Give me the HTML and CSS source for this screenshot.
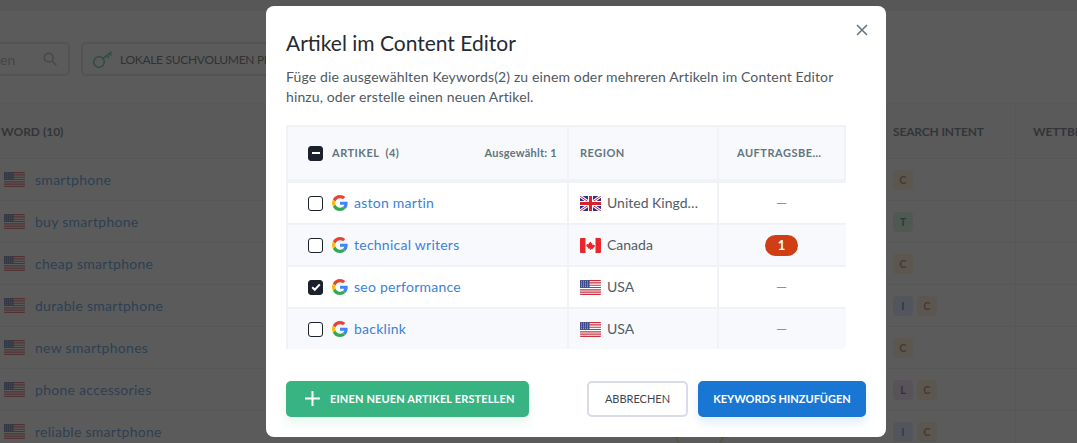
FILE: index.html
```html
<!DOCTYPE html>
<html lang="de">
<head>
  <meta charset="UTF-8" />
  <meta name="viewport" content="width=device-width, initial-scale=1.0" />
  <title>Artikel im Content Editor</title>
  <link rel="stylesheet" href="styles.css">
</head>
<body>
  <svg class="icon-defs" aria-hidden="true">
    <symbol id="flag-us" viewBox="0 0 21 15">
      <rect width="21" height="15" fill="#fff"/>
      <path d="M0 .6h21M0 2.9h21M0 5.2h21M0 7.5h21M0 9.8h21M0 12.1h21M0 14.4h21" stroke="#c8313e" stroke-width="1.15"/>
      <rect width="9.5" height="7.5" fill="#3f4a8a"/>
      <path d="M1 1.2h8M1 3h8M1 4.8h8M1 6.4h8" stroke="#c9cde6" stroke-width=".7" stroke-dasharray="1 1"/>
    </symbol>
    <symbol id="flag-gb" viewBox="0 0 21 15">
      <rect width="21" height="15" fill="#2b2f8f"/>
      <path d="M0 0l21 15M21 0L0 15" stroke="#fff" stroke-width="3"/>
      <path d="M0 0l21 15M21 0L0 15" stroke="#d8232f" stroke-width="1"/>
      <path d="M10.5 0v15M0 7.5h21" stroke="#fff" stroke-width="5"/>
      <path d="M10.5 0v15M0 7.5h21" stroke="#d8232f" stroke-width="3"/>
    </symbol>
    <symbol id="flag-ca" viewBox="0 0 21 15">
      <rect width="21" height="15" fill="#fff"/>
      <rect width="5.5" height="15" fill="#e8262c"/>
      <rect x="15.5" width="5.5" height="15" fill="#e8262c"/>
      <path d="M10.5 3.6l.9 1.7 1-.4-.4 2.2 1.3-.9.4.9 1.2-.2-.4 1.4.5.3-2.3 1.8.2.9-2-.3V12h-.8v-1.5l-2 .3.2-.9-2.3-1.8.5-.3-.4-1.4 1.2.2.4-.9 1.3.9-.4-2.2 1 .4z" fill="#e8262c"/>
    </symbol>
    <symbol id="logo-google" viewBox="0 0 48 48">
      <path fill="#ea4335" d="M24 9.5c3.5 0 6.700 1.300 9.100 3.500l6.800-6.800C35.800 2.400 30.300 0 24 0 14.600 0 6.500 5.400 2.600 13.200l7.900 6.200C12.400 13.700 17.700 9.500 24 9.500z"/>
      <path fill="#4285f4" d="M47 24.500c0-1.600-.2-3.100-.4-4.500H24v9h12.900c-.6 3-2.200 5.400-4.700 7.100l7.600 5.900C44.300 37.800 47 31.700 47 24.500z"/>
      <path fill="#fbbc05" d="M10.500 28.600c-.5-1.400-.8-3-.8-4.600s.3-3.200.8-4.600l-7.900-6.200C.9 16.500 0 20.100 0 24s.9 7.500 2.600 10.800l7.900-6.200z"/>
      <path fill="#34a853" d="M24 48c6.500 0 11.900-2.100 15.800-5.800l-7.600-5.900c-2.100 1.400-4.900 2.300-8.200 2.300-6.300 0-11.600-4.200-13.500-9.900l-7.900 6.200C6.500 42.600 14.600 48 24 48z"/>
    </symbol>
  </svg>

  <div class="page">
    <div class="top-strip"></div>
    <div class="toolbar">
      <div class="search-box">
        <span>en</span>
        <svg class="search-icon" viewBox="0 0 16 16"><circle cx="6.500" cy="6.500" r="5"/><path d="M10.200 10.200l5 5"/></svg>
      </div>
      <div class="key-btn">
        <svg class="key-icon" viewBox="0 0 20 18"><circle cx="6" cy="12" r="5.300"/><path d="M10 8.500l8.500-6.500M14 5.500l2 2.500M16.700 3.400l1.600 2"/></svg>
        LOKALE SUCHVOLUMEN PRÜFEN
      </div>
    </div>

    <div class="bg-table">
      <div class="bg-row bg-head">
        <div class="bg-word">WORD (10)</div>
        <div class="bg-intent">SEARCH INTENT</div>
        <div class="bg-rest">WETTBEWERB</div>
      </div>
      <div class="bg-row">
        <div class="bg-word"><svg class="flag"><use href="#flag-us"/></svg><span>smartphone</span></div>
        <div class="bg-intent"><i class="tag tag-c">C</i></div>
        <div class="bg-rest"></div>
      </div>
      <div class="bg-row">
        <div class="bg-word"><svg class="flag"><use href="#flag-us"/></svg><span>buy smartphone</span></div>
        <div class="bg-intent"><i class="tag tag-t">T</i></div>
        <div class="bg-rest"></div>
      </div>
      <div class="bg-row">
        <div class="bg-word"><svg class="flag"><use href="#flag-us"/></svg><span>cheap smartphone</span></div>
        <div class="bg-intent"><i class="tag tag-c">C</i></div>
        <div class="bg-rest"></div>
      </div>
      <div class="bg-row">
        <div class="bg-word"><svg class="flag"><use href="#flag-us"/></svg><span>durable smartphone</span></div>
        <div class="bg-intent"><i class="tag tag-i">I</i><i class="tag tag-c">C</i></div>
        <div class="bg-rest"></div>
      </div>
      <div class="bg-row">
        <div class="bg-word"><svg class="flag"><use href="#flag-us"/></svg><span>new smartphones</span></div>
        <div class="bg-intent"><i class="tag tag-c">C</i></div>
        <div class="bg-rest"></div>
      </div>
      <div class="bg-row">
        <div class="bg-word"><svg class="flag"><use href="#flag-us"/></svg><span>phone accessories</span></div>
        <div class="bg-intent"><i class="tag tag-l">L</i><i class="tag tag-c">C</i></div>
        <div class="bg-rest"></div>
      </div>
      <div class="bg-row">
        <div class="bg-word"><svg class="flag"><use href="#flag-us"/></svg><span>reliable smartphone</span></div>
        <div class="bg-intent"><i class="tag tag-i">I</i><i class="tag tag-c">C</i></div>
        <div class="bg-rest"></div>
      </div>
    </div>
    <div class="score-ring"></div>
  </div>

  <div class="overlay">
    <div class="modal">
      <button class="close-btn" aria-label="Schließen">
        <svg viewBox="0 0 12 12"><path d="M1 1l10 10M11 1L1 11"/></svg>
      </button>
      <h1>Artikel im Content Editor</h1>
      <p class="modal-text">Füge die ausgewählten Keywords(2) zu einem oder mehreren Artikeln im Content Editor hinzu, oder erstelle einen neuen Artikel.</p>

      <div class="articles">
        <div class="art-row art-head">
          <div class="art-cell cell-name">
            <span class="check check-on check-minus"></span>
            <span class="head-label">ARTIKEL&nbsp; (4)</span>
            <span class="selected-count">Ausgewählt: 1</span>
          </div>
          <div class="art-cell cell-region"><span class="head-label">REGION</span></div>
          <div class="art-cell cell-orders"><span class="head-label head-clip">AUFTRAGSBEARBEITUNG</span></div>
        </div>

        <div class="art-row">
          <div class="art-cell cell-name">
            <span class="check"></span>
            <svg class="g-logo"><use href="#logo-google"/></svg>
            <a class="art-link">aston martin</a>
          </div>
          <div class="art-cell cell-region"><svg class="flag"><use href="#flag-gb"/></svg><span class="region-name">United Kingdom</span></div>
          <div class="art-cell cell-orders"><span class="dash">—</span></div>
        </div>

        <div class="art-row">
          <div class="art-cell cell-name">
            <span class="check"></span>
            <svg class="g-logo"><use href="#logo-google"/></svg>
            <a class="art-link">technical writers</a>
          </div>
          <div class="art-cell cell-region"><svg class="flag"><use href="#flag-ca"/></svg><span class="region-name">Canada</span></div>
          <div class="art-cell cell-orders"><span class="count-pill">1</span></div>
        </div>

        <div class="art-row">
          <div class="art-cell cell-name">
            <span class="check check-on">
              <svg viewBox="0 0 14 14"><path d="M3.200 7.300l2.600 2.500 5-5.400"/></svg>
            </span>
            <svg class="g-logo"><use href="#logo-google"/></svg>
            <a class="art-link">seo performance</a>
          </div>
          <div class="art-cell cell-region"><svg class="flag"><use href="#flag-us"/></svg><span class="region-name">USA</span></div>
          <div class="art-cell cell-orders"><span class="dash">—</span></div>
        </div>

        <div class="art-row">
          <div class="art-cell cell-name">
            <span class="check"></span>
            <svg class="g-logo"><use href="#logo-google"/></svg>
            <a class="art-link">backlink</a>
          </div>
          <div class="art-cell cell-region"><svg class="flag"><use href="#flag-us"/></svg><span class="region-name">USA</span></div>
          <div class="art-cell cell-orders"><span class="dash">—</span></div>
        </div>
      </div>

      <div class="modal-footer">
        <button class="btn btn-green">
          <svg viewBox="0 0 15 15"><path d="M7.500 0v15M0 7.500h15"/></svg>
          <span>EINEN NEUEN ARTIKEL ERSTELLEN</span>
        </button>
        <div class="footer-right">
          <button class="btn btn-outline">ABBRECHEN</button>
          <button class="btn btn-blue">KEYWORDS HINZUFÜGEN</button>
        </div>
      </div>
    </div>
  </div>
</body>
</html>
```

FILE: styles.css
```css
* {
    margin: 0;
    padding: 0;
    box-sizing: border-box;
}

body {
    font-family: 'Lato', 'Liberation Sans', sans-serif;
    background: #ffffff;
    width: 1077px;
    height: 443px;
    overflow: hidden;
    position: relative;
}

.icon-defs {
    display: none;
}

.flag {
    width: 21px;
    height: 15px;
    flex: none;
    border-radius: 1px;
}

/* page behind the dialog */
.page {
    height: 443px;
    overflow: hidden;
    position: relative;
}

.top-strip {
    height: 11px;
    background: #ebebef;
}

.toolbar {
    display: flex;
    gap: 11px;
    padding: 31px 0 27px;
}

.search-box {
    width: 70px;
    height: 34px;
    display: flex;
    align-items: center;
    justify-content: space-between;
    padding-right: 11px;
    border: 2px solid #d6d8e2;
    border-left: 0;
    border-radius: 0 5px 5px 0;
    font-size: 14px;
    color: #8f949c;
}

.search-icon {
    width: 14px;
    height: 14px;
    fill: none;
    stroke: #8f949c;
    stroke-width: 1.6;
}

.key-btn {
    width: 340px;
    height: 34px;
    display: flex;
    align-items: center;
    gap: 7px;
    padding-left: 10px;
    border: 2px solid #d6d8e2;
    border-radius: 5px;
    font-size: 12px;
    letter-spacing: -0.3px;
    color: #26303a;
}

.key-icon {
    width: 20px;
    height: 18px;
    fill: none;
    stroke: #2fb57c;
    stroke-width: 1.6;
}

.bg-row {
    display: grid;
    grid-template-columns: 886px 130px 1fr;
    height: 42px;
    border-bottom: 1px solid #e9eaee;
    font-size: 14px;
    letter-spacing: 0.28px;
}

.bg-head {
    height: 56px;
    background: #f8f9fb;
    border-top: 1px solid #eeeff3;
    font-size: 12px;
    letter-spacing: 0;
    font-weight: 700;
    color: #34424e;
}

.bg-word, .bg-intent, .bg-rest {
    display: flex;
    align-items: center;
}

.bg-word {
    gap: 10px;
    padding-left: 4px;
    color: #1976d2;
}

.bg-head .bg-word {
    padding-left: 1px;
    color: #34424e;
}

.bg-intent {
    gap: 4px;
    padding-left: 7px;
    border-right: 1px solid #e9eaee;
}

.bg-head .bg-intent {
    letter-spacing: -0.15px;
}

.bg-rest {
    padding-left: 17px;
    white-space: nowrap;
}

.tag {
    width: 20px;
    height: 20px;
    display: flex;
    align-items: center;
    justify-content: center;
    border-radius: 4px;
    font-size: 11px;
    letter-spacing: 0;
    font-style: normal;
    font-weight: 700;
}

.tag-c { background: #ffe3c0; color: #9a5a14; }
.tag-t { background: #c6f0dc; color: #10603f; }
.tag-i { background: #cfe2ff; color: #1f4fa0; }
.tag-l { background: #e9d8f5; color: #4f1f88; }

.score-ring {
    position: absolute;
    left: 673px;
    top: 400px;
    width: 53px;
    height: 53px;
    border: 1px solid #e0b400;
    border-radius: 50%;
}

/* dialog */
.overlay {
    position: absolute;
    inset: 0;
    display: flex;
    align-items: center;
    padding-left: 266px;
    background: rgba(50, 50, 50, 0.8);
}

.modal {
    position: relative;
    width: 620px;
    height: 431px;
    background: #ffffff;
    border-radius: 8px;
    padding: 21px 20px 20px;
}

.close-btn {
    position: absolute;
    top: 18px;
    right: 18px;
    width: 12px;
    height: 12px;
    border: 0;
    background: none;
    display: flex;
}

.close-btn svg {
    width: 12px;
    height: 12px;
    fill: none;
    stroke: #5f7585;
    stroke-width: 1.5;
}

h1 {
    font-size: 21px;
    line-height: 32px;
    font-weight: 400;
    color: #252a31;
    margin-bottom: 8px;
}

.modal-text {
    width: 560px;
    font-size: 14px;
    line-height: 20px;
    letter-spacing: 0.13px;
    color: #4f5963;
    margin-bottom: 18px;
}

.articles {
    width: 560px;
    height: 224px;
    background: #f1f2f7;
    padding: 2px 0 0 2px;
    border-bottom-right-radius: 5px;
    overflow: hidden;
}

.art-row {
    display: grid;
    grid-template-columns: 279px 148px 127px;
    column-gap: 2px;
    height: 40px;
    margin-bottom: 2px;
}

.art-row .art-cell {
    background: #ffffff;
}

.art-row:nth-child(odd) .art-cell {
    background: #f8f9fc;
}

.art-head {
    height: 52px;
    margin-bottom: 4px;
    grid-template-columns: 279px 148px 125px;
}

.art-row.art-head .art-cell {
    background: #f8f9fc;
}

.art-cell {
    display: flex;
    align-items: center;
    min-width: 0;
    font-size: 14px;
}

.cell-name {
    padding: 0 10px 0 20px;
}

.cell-region {
    gap: 6px;
    padding: 0 18px 0 11px;
    color: #525c66;
}

.region-name {
    padding-bottom: 2px;
    overflow: hidden;
    text-overflow: ellipsis;
    white-space: nowrap;
}

.cell-orders {
    justify-content: center;
    padding-right: 2px;
}

.art-head .cell-orders {
    padding-right: 0;
}

.check {
    width: 15px;
    height: 15px;
    flex: none;
    margin-right: 9px;
    background: #ffffff;
    border: 1.5px solid #1c222c;
    border-radius: 3px;
    display: flex;
    align-items: center;
    justify-content: center;
}

.check-on {
    background: #1c222c;
}

.check svg {
    width: 14px;
    height: 14px;
    flex: none;
    fill: none;
    stroke: #ffffff;
    stroke-width: 2;
}

.check-minus::after {
    content: "";
    width: 8px;
    height: 2px;
    background: #ffffff;
}

.g-logo {
    width: 16px;
    height: 16px;
    flex: none;
    margin-right: 6px;
}

.art-link {
    padding-bottom: 2px;
    letter-spacing: 0.25px;
    color: #3b82d6;
}

.head-label {
    padding-bottom: 2px;
    font-size: 11px;
    font-weight: 700;
    letter-spacing: 0.5px;
    color: #62757f;
    white-space: nowrap;
}

.head-clip {
    width: 89px;
    overflow: hidden;
    text-overflow: ellipsis;
}

.selected-count {
    margin-left: auto;
    padding-bottom: 2px;
    font-size: 11px;
    font-weight: 700;
    letter-spacing: 0.25px;
    color: #62757f;
}

.dash {
    font-size: 14px;
    padding-bottom: 1px;
    color: #8b939b;
}

.count-pill {
    width: 33px;
    height: 21px;
    border-radius: 11px;
    background: #cf3f13;
    color: #ffffff;
    font-size: 13px;
    font-weight: 700;
    display: flex;
    align-items: center;
    justify-content: center;
}

.modal-footer {
    display: flex;
    justify-content: space-between;
    margin-top: 32px;
}

.footer-right {
    display: flex;
    gap: 10px;
}

.btn {
    height: 36px;
    padding-bottom: 1px;
    border: 0;
    border-radius: 5px;
    font-family: inherit;
    font-size: 11px;
    font-weight: 700;
    display: flex;
    align-items: center;
    justify-content: center;
    color: #ffffff;
}

.btn-green {
    width: 243px;
    justify-content: flex-start;
    gap: 10px;
    padding-left: 19px;
    letter-spacing: 0.14px;
    background: #38b382;
    box-shadow: 0 6px 10px rgba(56, 179, 130, 0.12);
}

.btn-green svg {
    width: 15px;
    height: 15px;
    fill: none;
    stroke: #ffffff;
    stroke-width: 2;
}

.btn-outline {
    width: 101px;
    background: #ffffff;
    border: 2px solid #d8dbe9;
    color: #3f4650;
    font-weight: 400;
}

.btn-blue {
    width: 168px;
    background: #1976d2;
    box-shadow: 0 6px 10px rgba(25, 118, 210, 0.12);
}
```
